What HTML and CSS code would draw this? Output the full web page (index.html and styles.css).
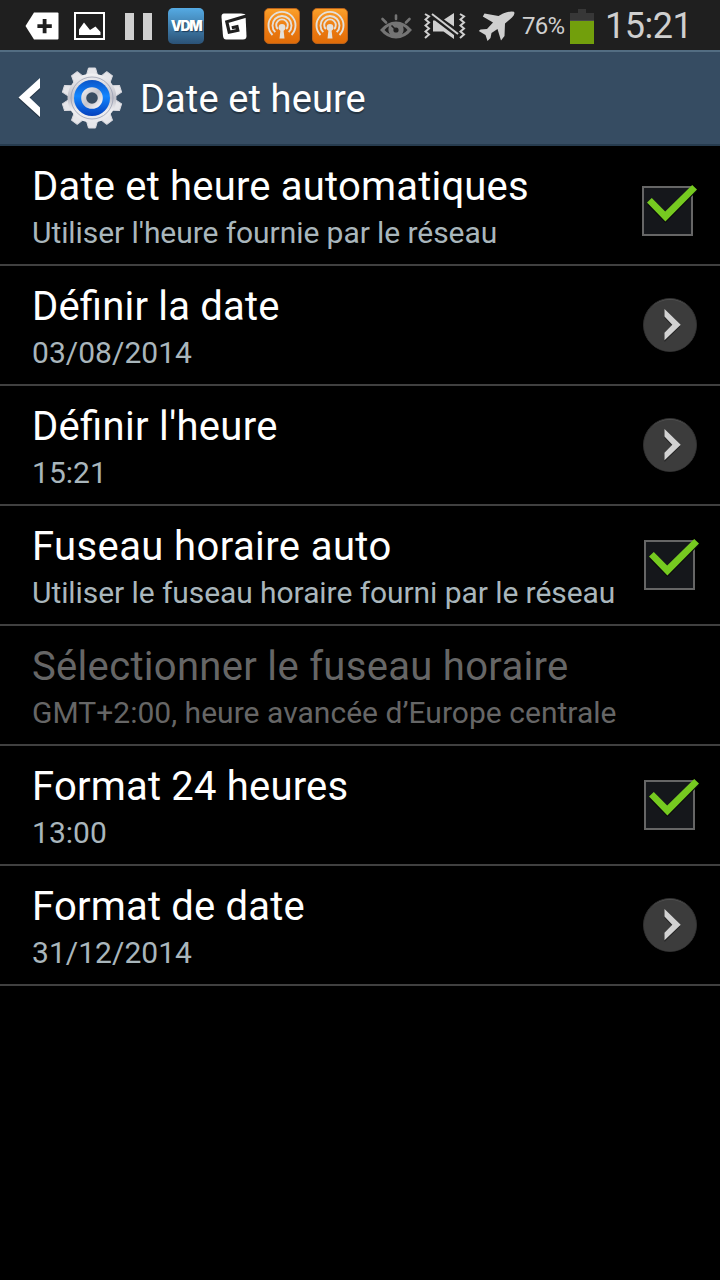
FILE: index.html
```
<!DOCTYPE html>
<html lang="fr">
<head>
  <meta charset="UTF-8" />
  <meta name="viewport" content="width=device-width, initial-scale=1.0"/>
  <title>Date et heure</title>
  <link rel="stylesheet" href="styles.css">
</head>
<body>
  <!-- Shared shapes -->
  <svg class="defs" width="0" height="0">
    <defs>
      <linearGradient id="orange" x1="0" y1="0" x2="0" y2="1">
        <stop offset="0" stop-color="#fba12b"/>
        <stop offset="0.5" stop-color="#ee7d12"/>
        <stop offset="1" stop-color="#e06c08"/>
      </linearGradient>
      <linearGradient id="metal" x1="0" y1="0" x2="1" y2="1">
        <stop offset="0" stop-color="#e9e9ec"/>
        <stop offset="0.5" stop-color="#c4c4cb"/>
        <stop offset="1" stop-color="#f5f5f7"/>
      </linearGradient>
      <linearGradient id="body" x1="0" y1="0" x2="0" y2="1">
        <stop offset="0" stop-color="#f2f2f4"/>
        <stop offset="0.5" stop-color="#c0c0c9"/>
        <stop offset="0.75" stop-color="#ededf0"/>
        <stop offset="1" stop-color="#e8e8ec"/>
      </linearGradient>
      <linearGradient id="blue" x1="0" y1="0" x2="0" y2="1">
        <stop offset="0" stop-color="#0b55c8"/>
        <stop offset="0.45" stop-color="#1286ff"/>
        <stop offset="1" stop-color="#0540bd"/>
      </linearGradient>
      <linearGradient id="disc" x1="0" y1="0" x2="0" y2="1">
        <stop offset="0" stop-color="#5a5a5a"/>
        <stop offset="0.15" stop-color="#3c3c3c"/>
        <stop offset="1" stop-color="#444"/>
      </linearGradient>
      <symbol id="podcast" viewBox="0 0 36 36">
        <rect x="0.5" y="0.5" width="35" height="35" rx="4.5" fill="url(#orange)" stroke="#b9611a"/>
        <g fill="none" stroke="#e4e0da" stroke-width="1.9">
          <path d="M8.5 27A13.5 13.5 0 1 1 27.5 27"/>
          <path d="M11.3 24.2A9.5 9.5 0 1 1 24.7 24.2"/>
          <path d="M13.8 21.2A5.8 5.8 0 1 1 22.2 21.2"/>
        </g>
        <circle cx="18" cy="19.5" r="3.4" fill="#e4e0da"/>
        <path d="M16.7 20h2.6l1.2 10.5h-5z" fill="#e4e0da"/>
      </symbol>
      <symbol id="check" viewBox="0 0 56 53">
        <rect x="1" y="3" width="49" height="48" fill="#15171b" stroke="#666" stroke-width="2"/>
        <path d="M5.5 19.5L10 15.3 23.2 28.6 50.5 1.5 55 5.6 23.5 37.5z" fill="#0a0b0c" transform="translate(0 1.5)"/>
        <path d="M5 18.5L9.8 14 23.2 27.4 50.2 1 55 5.5 23.4 37.5z" fill="#76ca20"/>
      </symbol>
      <symbol id="go" viewBox="0 0 54 54">
        <circle cx="27" cy="27" r="26.5" fill="url(#disc)" stroke="#2f2f2f"/>
        <circle cx="27" cy="27.5" r="25.7" fill="#3c3c3c"/>
        <path d="M21.5 13L37.2 28.5 21.5 44V36.5L29.5 28.5 21.5 20z" fill="#252525"/>
        <path d="M21.5 11L37.7 26.8 21.5 42.3V34.8L29.3 26.8 21.5 18.5z" fill="#d2d2d2"/>
      </symbol>
    </defs>
  </svg>

  <div class="status-bar">
    <div class="notifications">
      <svg class="icon-tag" width="34" height="28" viewBox="0 0 34 28">
        <path d="M9 .5H32.5Q33.5 .5 33.5 1.5V26.5Q33.5 27.5 32.5 27.5H9L.5 14z" fill="#fff"/>
        <path d="M17.7 7h3.8v5.300h5.300v3.600h-5.300v5.300h-3.800v-5.300h-5.300v-3.600h5.300z" fill="#1f1f1f"/>
      </svg>
      <svg class="icon-picture" width="31" height="28" viewBox="0 0 31 28">
        <rect x="1" y="1" width="29" height="26" fill="none" stroke="#fff" stroke-width="2"/>
        <path d="M5 23V17.5L10 10.5 16 18 21.5 14.5 26.5 20V23z" fill="#fff"/>
      </svg>
      <svg class="icon-pause" width="27" height="27" viewBox="0 0 27 27">
        <path d="M0 0h9v27H0zM18 0h9v27h-9z" fill="#cfcfcf"/>
      </svg>
      <div class="app-vdm"><span>VDM</span></div>
      <svg class="icon-g" width="26" height="27" viewBox="0 0 26 27">
        <path d="M3 .5H20Q24 .5 24.5 2L25.5 23Q25.5 26.5 22 26.5H5Q2.500 26.5 2 23L.5 4Q.3 .5 3 .5z" fill="#fff"/>
        <path d="M26 2.800L5.800 8.800 8.200 19.200 16.800 17.300 16 13.600 10.800 14.800" fill="none" stroke="#1f1f1f" stroke-width="3.200"/>
      </svg>
      <svg class="icon-podcast" width="36" height="36"><use href="#podcast"/></svg>
      <svg class="icon-podcast" width="36" height="36"><use href="#podcast"/></svg>
    </div>
    <div class="system">
      <svg class="icon-eye" width="32" height="25" viewBox="0 0 32 25">
        <path d="M0 16Q7 7.5 16 7.5T32 16Q25 24.5 16 24.5T0 16z" fill="#747474"/>
        <path d="M4.5 16Q6.5 13.5 9 12.2 7.5 17 10 20.3 6.5 18.5 4.5 16zM27.5 16Q25.5 13.5 23 12.2 24.5 17 22 20.3 25.5 18.5 27.5 16z" fill="#1f1f1f"/>
        <circle cx="16" cy="16" r="2.6" fill="#1f1f1f"/>
        <path d="M16 16L11.5 11.5" stroke="#1f1f1f" stroke-width="1.6"/>
        <path d="M16 1.5V5M2.5 5L6 8.5M29.5 5L26 8.5" stroke="#747474" stroke-width="2.6" stroke-linecap="round"/>
      </svg>
      <svg class="icon-mute" width="42" height="28" viewBox="0 0 42 28">
        <g fill="none" stroke="#cfcfcf" stroke-width="2">
          <path d="M1 2L5 4.5 1.5 7.5 5 10.5 1.5 13.5 5 16.5 1.5 19.5 5 22.5 1 26"/>
          <path d="M36 2L40 4.5 36.5 7.5 40 10.5 36.5 13.5 40 16.5 36.5 19.5 40 22.5 36 26"/>
          <path d="M8 2L34 22"/>
        </g>
        <path d="M9 8.5H11L30 23V27L19.5 19.5H9zM20 7.5L30 1V14.5z" fill="#cfcfcf"/>
      </svg>
      <svg class="icon-plane" width="37" height="30" viewBox="0 0 37 30">
        <path d="M36 .8Q37.5 3 34 6.5L27 12.5 26.5 25 23 29.5 19.5 18 13.5 22 12.5 27 9.5 30 7.5 24 .8 20 2.5 18.5 9 18 15 11.5 4.8 5.5 6.5 2.5 20.5 5 25 2.5Q32 -.3 36 .8z" fill="#cfcfcf"/>
      </svg>
      <span class="percent">76%</span>
      <svg class="icon-battery" width="24" height="35" viewBox="0 0 24 35">
        <path d="M8 0h8v4h8v7H0V4h8z" fill="#373737"/>
        <path d="M0 11h24v1H0z" fill="#4a4a4a"/>
        <path d="M0 12h24v23H0z" fill="#729f0c"/>
      </svg>
      <span class="clock">15:21</span>
    </div>
  </div>

  <header class="action-bar">
    <svg class="back" width="22" height="40" viewBox="0 0 22 40">
      <path d="M22 2V11.5L11.5 20.5 22 31V40.5L0 20.5z" fill="#263646"/>
      <path d="M22 0V10L11.5 19.5 22 29.5V39L.5 19.5z" fill="#fff"/>
    </svg>
    <svg class="gear" width="62" height="62" viewBox="-31 -31 62 62">
      <g fill="#e6e6ea" stroke="#d9d9df" stroke-width="1" stroke-linejoin="round">
        <g id="teeth">
          <path id="tooth" d="M-5.500 -23L-3.500 -30H3.500L5.500 -23z"/>
          <use href="#tooth" transform="rotate(36)"/>
          <use href="#tooth" transform="rotate(72)"/>
          <use href="#tooth" transform="rotate(108)"/>
          <use href="#tooth" transform="rotate(144)"/>
        </g>
        <use href="#teeth" transform="rotate(180)"/>
      </g>
      <circle r="24.5" fill="url(#body)"/>
      <circle r="21" fill="none" stroke="#9ba0b3" stroke-width=".8"/>
      <circle r="18" fill="url(#blue)"/>
      <circle r="8.3" fill="#374c61" stroke="url(#metal)" stroke-width="5"/>
    </svg>
    <h1>Date et heure</h1>
  </header>

  <ul class="settings">
    <li class="row">
      <div class="text">
        <div class="title">Date et heure automatiques</div>
        <div class="summary long">Utiliser l'heure fournie par le réseau</div>
      </div>
      <svg class="check first" width="56" height="53"><use href="#check"/></svg>
    </li>
    <li class="row">
      <div class="text">
        <div class="title">Définir la date</div>
        <div class="summary">03/08/2014</div>
      </div>
      <svg class="go" width="54" height="54"><use href="#go"/></svg>
    </li>
    <li class="row">
      <div class="text">
        <div class="title wide">Définir l'heure</div>
        <div class="summary">15:21</div>
      </div>
      <svg class="go" width="54" height="54"><use href="#go"/></svg>
    </li>
    <li class="row">
      <div class="text">
        <div class="title wider">Fuseau horaire auto</div>
        <div class="summary long">Utiliser le fuseau horaire fourni par le réseau</div>
      </div>
      <svg class="check" width="56" height="53"><use href="#check"/></svg>
    </li>
    <li class="row disabled">
      <div class="text">
        <div class="title wide">Sélectionner le fuseau horaire</div>
        <div class="summary">GMT+2:00, heure avancée d’Europe centrale</div>
      </div>
    </li>
    <li class="row">
      <div class="text">
        <div class="title">Format 24 heures</div>
        <div class="summary">13:00</div>
      </div>
      <svg class="check" width="56" height="53"><use href="#check"/></svg>
    </li>
    <li class="row">
      <div class="text">
        <div class="title">Format de date</div>
        <div class="summary">31/12/2014</div>
      </div>
      <svg class="go" width="54" height="54"><use href="#go"/></svg>
    </li>
  </ul>
</body>
</html>
```
FILE: styles.css
```
* {
  box-sizing: border-box;
}

body {
  margin: 0;
  min-height: 1280px;
  background: #000;
  color: #fff;
  font-family: Roboto, sans-serif;
}

svg {
  display: block;
  flex: none;
}

.defs {
  position: absolute;
}

.status-bar {
  display: flex;
  justify-content: space-between;
  height: 50px;
  padding: 0 28px 0 25px;
  background: #1f1f1f;
  color: #cfcfcf;
}

.notifications,
.system {
  display: flex;
  align-items: center;
  height: 52px;
}

.icon-picture {
  margin-left: 15px;
}

.icon-pause {
  margin-left: 20px;
}

.app-vdm {
  display: flex;
  align-items: center;
  justify-content: center;
  width: 36px;
  height: 36px;
  margin-left: 16px;
  border-radius: 5px;
  background: linear-gradient(#55abe4, #2b5276);
  color: #fff;
  font-family: Inter, sans-serif;
  font-weight: 900;
  font-size: 14px;
  letter-spacing: -1.4px;
  text-shadow: 1px 1px 1px #1d3c5a;
}

.app-vdm span {
  margin-top: -2px;
}

.icon-g {
  margin-left: 17px;
}

.icon-podcast {
  margin-left: 17px;
}

.icon-podcast + .icon-podcast {
  margin-left: 12px;
}

.icon-mute {
  margin-left: 12px;
}

.icon-plane {
  margin-left: 12px;
}

.percent {
  width: 44px;
  margin-left: 7px;
  font-size: 24px;
  letter-spacing: -0.8px;
}

.icon-battery {
  margin-left: 4px;
}

.clock {
  width: 86px;
  margin-left: 12px;
  font-size: 36px;
  letter-spacing: -0.5px;
  text-indent: -1px;
  white-space: nowrap;
}

.action-bar {
  display: flex;
  align-items: center;
  height: 96px;
  padding: 0 18px;
  border-top: 2px solid #536d82;
  border-bottom: 2px solid #263b4e;
  background: #364c62;
}

.gear {
  margin-left: 21px;
}

h1 {
  margin: 1px 0 0 17px;
  font-size: 38px;
  font-weight: 400;
  letter-spacing: 0.12px;
  text-shadow: 0 2px 1px #253442;
}

.settings {
  margin: 0;
  padding: 0;
  list-style: none;
}

.row {
  display: flex;
  justify-content: space-between;
  height: 120px;
  padding: 0 23px 0 32px;
  border-bottom: 2px solid #404040;
}

.text {
  padding-top: 17px;
  white-space: nowrap;
}

.title {
  font-size: 40px;
  line-height: 47px;
  letter-spacing: 0.2px;
  font-feature-settings: "liga" 1;
}

.title.wide {
  letter-spacing: 0.31px;
}

.title.wider {
  letter-spacing: 0.4px;
}

.summary {
  margin-top: 5px;
  color: #a9b6bc;
  font-size: 30px;
  line-height: 35px;
  letter-spacing: 0.03px;
}

.summary.long {
  letter-spacing: -0.07px;
}

.disabled .title,
.disabled .summary {
  color: #666;
}

.check {
  margin: 32px -3px 0 0;
}

.check.first {
  margin: 38px -1px 0 0;
}

.go {
  margin-top: 32px;
}
```
